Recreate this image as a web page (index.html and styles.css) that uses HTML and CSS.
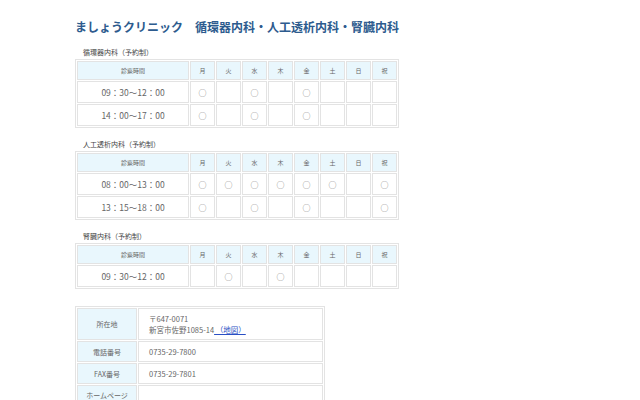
FILE: index.html
```html
<!DOCTYPE html>
<html lang="ja">
<head>
<meta charset="utf-8">
<title>ましょうクリニック</title>
<link rel="stylesheet" href="styles.css">
</head>
<body>
<div class="page">
  <h1 class="title">ましょうクリニック　循環器内科・人工透析内科・腎臓内科</h1>

  <p class="sub">循環器内科（予約制）</p>
  <table class="sched">
    <tr><th class="time">診察時間</th><th>月</th><th>火</th><th>水</th><th>木</th><th>金</th><th>土</th><th>日</th><th>祝</th></tr>
    <tr><td class="time">09：30〜12：00</td><td>○</td><td></td><td>○</td><td></td><td>○</td><td></td><td></td><td></td></tr>
    <tr><td class="time">14：00〜17：00</td><td>○</td><td></td><td>○</td><td></td><td>○</td><td></td><td></td><td></td></tr>
  </table>

  <p class="sub">人工透析内科（予約制）</p>
  <table class="sched">
    <tr><th class="time">診察時間</th><th>月</th><th>火</th><th>水</th><th>木</th><th>金</th><th>土</th><th>日</th><th>祝</th></tr>
    <tr><td class="time">08：00〜13：00</td><td>○</td><td>○</td><td>○</td><td>○</td><td>○</td><td>○</td><td></td><td>○</td></tr>
    <tr><td class="time">13：15〜18：00</td><td>○</td><td></td><td>○</td><td></td><td>○</td><td></td><td></td><td>○</td></tr>
  </table>

  <p class="sub">腎臓内科（予約制）</p>
  <table class="sched">
    <tr><th class="time">診察時間</th><th>月</th><th>火</th><th>水</th><th>木</th><th>金</th><th>土</th><th>日</th><th>祝</th></tr>
    <tr><td class="time">09：30〜12：00</td><td></td><td>○</td><td></td><td>○</td><td></td><td></td><td></td><td></td></tr>
  </table>

  <table class="info">
    <tr><th>所在地</th><td>〒647-0071<br>新宮市佐野1085-14<a href="#" class="map"> （地図）</a></td></tr>
    <tr><th>電話番号</th><td>0735-29-7800</td></tr>
    <tr><th>FAX番号</th><td>0735-29-7801</td></tr>
    <tr class="hp"><th>ホームページ</th><td></td></tr>
  </table>
</div>
</body>
</html>
```

FILE: styles.css
```css
html, body {
  margin: 0;
  padding: 0;
  background: #fff;
}

body {
  font-family: "Noto Sans CJK JP", "Noto Sans", sans-serif;
  color: #666;
}

.page {
  padding: 18px 0 0 75px;
}

.title {
  margin: 0;
  font-size: 12px;
  line-height: 18px;
  font-weight: bold;
  color: #2d5b8e;
}

.sub {
  margin: 11px 0 2px 8px;
  font-size: 7px;
  line-height: 10px;
  color: #444;
}

.sched + .sub {
  margin-top: 11px;
}

table {
  border-collapse: separate;
  border-spacing: 1px;
  border: 1px solid #e3e3e3;
}

th, td {
  border: 1px solid #e3e3e3;
  padding: 0;
  text-align: center;
  font-weight: normal;
}

.sched {
  width: 324px;
  table-layout: fixed;
}

.sched th {
  height: 17px;
  background: #e9f7fd;
  font-size: 6px;
  color: #666;
}

.sched th.time {
  width: 110px;
}

.sched td {
  height: 20px;
  font-size: 8px;
  color: #777;
}

.sched td.time {
  font-size: 8.5px;
  color: #666;
}

.info {
  margin-top: 17px;
  width: 250px;
  table-layout: fixed;
}

.info th {
  width: 58px;
  background: #e9f7fd;
  font-size: 7px;
  color: #666;
  height: 19px;
}

.info td {
  text-align: left;
  padding: 4px 0 4px 10px;
  font-size: 7.5px;
  line-height: 11px;
  color: #666;
}

.info tr.hp th,
.info tr.hp td {
  height: 18px;
  padding-top: 0;
  padding-bottom: 0;
}

.map {
  color: #2a4fc4;
  text-decoration: underline;
}
```
